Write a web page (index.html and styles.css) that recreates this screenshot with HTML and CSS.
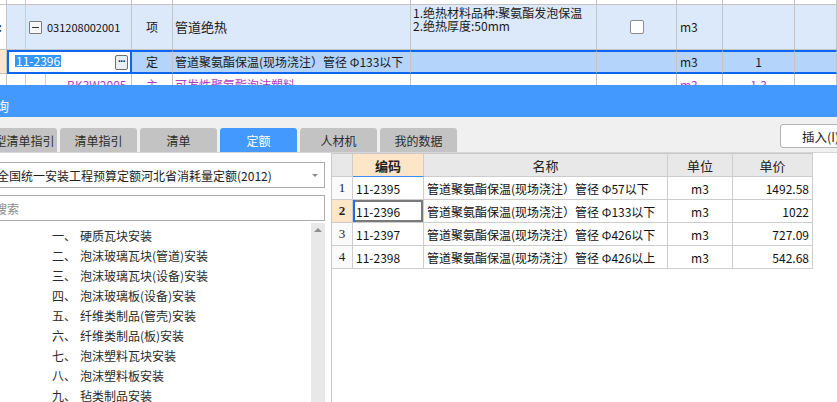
FILE: index.html
```html
<!DOCTYPE html>
<html lang="zh-CN">
<head>
<meta charset="utf-8">
<title>定额查询</title>
<link rel="stylesheet" href="styles.css">
</head>
<body>
<div class="grid-top">
  <div class="c"></div><div class="c code line1"></div><div class="c"></div><div class="c"></div><div class="c"></div><div class="c"></div><div class="c"></div><div class="c"></div><div class="c"></div>

  <div class="c rh"><span class="dots">:</span></div>
  <div class="c code line1 r1"><span class="fold"></span><span class="num">031208002001</span></div>
  <div class="c r1 center">项</div>
  <div class="c r1 name big">管道绝热</div>
  <div class="c r1 desc"><span>1.绝热材料品种:聚氨酯发泡保温</span><span>2.绝热厚度:50mm</span></div>
  <div class="c r1 center"><span class="chk"></span></div>
  <div class="c r1 unit">m3</div>
  <div class="c r1"></div>
  <div class="c r1"></div>

  <div class="c selrh"></div>
  <div class="c edit"><span class="hl">11-2396</span><span class="more">···</span></div>
  <div class="c r2 center">定</div>
  <div class="c r2 name">管道聚氨酯保温(现场浇注）管径 Φ133以下</div>
  <div class="c r2"></div>
  <div class="c r2"></div>
  <div class="c r2 unit">m3</div>
  <div class="c r2 center">1</div>
  <div class="c r2"></div>

  <div class="c"></div>
  <div class="c code line2 r3"><span class="sub">BK3W2005</span></div>
  <div class="c r3 center">主</div>
  <div class="c r3 name">可发性聚氨酯泡沫塑料</div>
  <div class="c"></div>
  <div class="c"></div>
  <div class="c r3 unit">m3</div>
  <div class="c r3 center">1.3</div>
  <div class="c"></div>
</div>

<div class="titlebar"><span class="title">查询</span></div>

<div class="toolbar">
  <div class="tabs">
    <div class="tab first">典型清单指引</div>
    <div class="tab">清单指引</div>
    <div class="tab">清单</div>
    <div class="tab active">定额</div>
    <div class="tab">人材机</div>
    <div class="tab">我的数据</div>
  </div>
  <button class="insert">插入(I)</button>
</div>

<div class="content">
  <div class="left">
    <div class="select"><span>全国统一安装工程预算定额河北省消耗量定额(2012)</span><i class="caret"></i></div>
    <div class="search">搜索</div>
    <div class="tree-wrap">
      <ul class="tree">
        <li><span class="no">一、</span>硬质瓦块安装</li>
        <li><span class="no">二、</span>泡沫玻璃瓦块(管道)安装</li>
        <li><span class="no">三、</span>泡沫玻璃瓦块(设备)安装</li>
        <li><span class="no">四、</span>泡沫玻璃板(设备)安装</li>
        <li><span class="no">五、</span>纤维类制品(管壳)安装</li>
        <li><span class="no">六、</span>纤维类制品(板)安装</li>
        <li><span class="no">七、</span>泡沫塑料瓦块安装</li>
        <li><span class="no">八、</span>泡沫塑料板安装</li>
        <li><span class="no">九、</span>毡类制品安装</li>
      </ul>
      <div class="vscroll"><i class="up"></i></div>
    </div>
  </div>
  <div class="right">
    <div class="tbl">
      <div class="h corner"></div>
      <div class="h hsel">编码</div>
      <div class="h">名称</div>
      <div class="h">单位</div>
      <div class="h">单价</div>

      <div class="rn">1</div>
      <div class="d code-d">11-2395</div>
      <div class="d name-d">管道聚氨酯保温(现场浇注）管径 Φ57以下</div>
      <div class="d ctr">m3</div>
      <div class="d price">1492.58</div>

      <div class="rn rnsel">2</div>
      <div class="d code-d focus">11-2396</div>
      <div class="d name-d">管道聚氨酯保温(现场浇注）管径 Φ133以下</div>
      <div class="d ctr">m3</div>
      <div class="d price">1022</div>

      <div class="rn">3</div>
      <div class="d code-d">11-2397</div>
      <div class="d name-d">管道聚氨酯保温(现场浇注）管径 Φ426以下</div>
      <div class="d ctr">m3</div>
      <div class="d price">727.09</div>

      <div class="rn">4</div>
      <div class="d code-d">11-2398</div>
      <div class="d name-d">管道聚氨酯保温(现场浇注）管径 Φ426以上</div>
      <div class="d ctr">m3</div>
      <div class="d price">542.68</div>
    </div>
  </div>
</div>
</body>
</html>
```

FILE: styles.css
```css
* { box-sizing: border-box; margin: 0; padding: 0; }
html, body { width: 837px; height: 402px; overflow: hidden; background: #fff; }
body {
  font-family: "Noto Sans CJK SC", "Noto Sans", sans-serif;
  font-size: 12px;
  color: #1a1a1a;
}

/* ---------- top grid ---------- */
.grid-top {
  display: grid;
  grid-template-columns: 7px 125px 41px 238px 186px 80px 46px 72px 42px;
  grid-template-rows: 5px 45px 24px 23px;
  height: 85px;
  overflow: hidden;
}
.grid-top .c {
  border-right: 1px solid #c4c4c4;
  border-bottom: 1px solid #c4c4c4;
  display: flex;
  align-items: center;
  white-space: pre;
  overflow: hidden;
  min-width: 0;
  line-height: 14px;
}
.dots { font-size: 12px; font-weight: bold; margin-left: -2px; color: #333; }
.code { padding-left: 22px; }
.line1 { background: linear-gradient(#f3c68c, #f3c68c) 18px 0 / 1px 100% no-repeat; }
.grid-top .line1.r1 { background: linear-gradient(#f3c68c, #f3c68c) 18px 0 / 1px 100% no-repeat, #dce9fb; }
.line2 {
  background:
    linear-gradient(#f3c68c, #f3c68c) 18px 0 / 1px 100% no-repeat,
    linear-gradient(#f3c68c, #f3c68c) 38px 0 / 1px 100% no-repeat,
    #fff;
}
.fold {
  width: 13px; height: 13px;
  border: 1px solid #7b7b7b;
  border-radius: 1px;
  background: #f7f7f7;
  display: flex; align-items: center; justify-content: center;
  flex: none;
}
.fold::after { content: ""; width: 7px; height: 1px; background: #333; }
.num { margin-left: 5px; font-size: 11px; color: #111; }
.r1 { background: #dce9fb; }
.r2 {
  background: #b4d4fb;
  border-top: 2px solid #0c66f1;
  border-bottom: 2px solid #0c66f1 !important;
}
.r3 { color: #b43dc1; }
.selrh { background: #fde7ca; }
.center { justify-content: center; }
.name { padding-left: 2px; }
.big { font-size: 13px; }
.grid-top .desc {
  flex-direction: column;
  align-items: flex-start;
  justify-content: flex-start;
  padding: 1px 0 0 2px;
  line-height: 13px;
}
.desc span { display: block; height: 13px; }
.chk {
  width: 14px; height: 14px;
  border: 1px solid #8d8d8d;
  border-radius: 2px;
  background: #fff;
}
.unit { padding-left: 3px; }
.sub { margin-left: 38px; }
.grid-top .edit {
  border: 2px solid #0c66f1;
  background: #fff;
  align-items: flex-start;
  padding: 3px 0 0 6px;
}
.hl {
  display: inline-block;
  height: 12px;
  line-height: 12px;
  background: #3297fd;
  color: #fff;
  padding: 0 1px;
}
.more {
  margin-left: auto;
  margin-right: 2px;
  width: 13px; height: 15px;
  border: 1px solid #6f6f6f;
  border-radius: 2px;
  background: #eceef6;
  font: bold 10px/12px "Liberation Sans", sans-serif;
  text-align: center;
  color: #222;
  letter-spacing: -1px;
}

/* ---------- title bar ---------- */
.titlebar {
  height: 32px;
  background: #4499ff;
  color: #fff;
  font-size: 13px;
  display: flex;
  align-items: center;
  padding-top: 8px;
}
.title { margin-left: -17px; }

/* ---------- tabs ---------- */
.toolbar {
  height: 36px;
  background: #f0f0f0;
  border-bottom: 1px solid #d6d6d6;
  display: flex;
}
.tabs { display: flex; gap: 3px; align-self: flex-end; }
.tab {
  width: 77px;
  height: 24px;
  background: #c3c3c3;
  border-radius: 3px 3px 0 0;
  color: #2b2b2b;
  font-size: 12px;
  display: flex; align-items: center; justify-content: center;
  white-space: nowrap;
}
.tab.first { margin-left: -20px; }
.tab.active { background: #4499ff; color: #fff; }
.insert {
  margin-left: auto;
  margin-top: 7px;
  margin-right: -3px;
  align-self: flex-start;
  height: 24px;
  width: 60px;
  background: #fff;
  border: 1px solid #b4b4b4;
  border-radius: 3px;
  font-family: "Noto Sans CJK SC", sans-serif;
  font-size: 12.5px;
  color: #222;
  text-align: left;
  padding-left: 21px;
  white-space: nowrap;
}

/* ---------- content ---------- */
.content { display: flex; height: 249px; }
.left { width: 325px; padding-top: 9px; display: flex; flex-direction: column; flex: none; }
.select, .search {
  height: 26px;
  margin-left: -10px;
  width: 335px;
  border: 1px solid #acacac;
  background: #fff;
  display: flex;
  align-items: center;
  white-space: nowrap;
}
.select { padding-left: 6px; color: #222; }
.caret {
  margin-left: auto;
  margin-right: 6px;
  border-left: 3px solid transparent;
  border-right: 3px solid transparent;
  border-top: 3px solid #8a8a8a;
}
.search { margin-top: 7px; padding-left: 4px; color: #8a8a8a; }
.tree-wrap { flex: 1; display: flex; min-height: 0; }
.tree { flex: 1; list-style: none; padding: 4px 0 0 52px; color: #2a2a2a; }
.tree li { height: 20px; display: flex; align-items: center; white-space: nowrap; }
.tree .no { width: 28px; flex: none; }
.vscroll { width: 14px; margin-top: 2px; background: #e8e8e8; display: flex; justify-content: center; }
.up {
  margin-top: 5px;
  width: 0; height: 0;
  border-left: 4.5px solid transparent;
  border-right: 4.5px solid transparent;
  border-bottom: 4px solid #8f8f8f;
}

.right { margin-left: 6px; border-left: 1px solid #c9c9c9; flex: 1; }
.tbl {
  display: grid;
  grid-template-columns: 21px 71px 244px 65px 80px;
  grid-template-rows: repeat(5, 23px);
  width: 481px;
  border-top: 1px solid #c9c9c9;
}
.tbl > div {
  border-right: 1px solid #cdcdcd;
  border-bottom: 1px solid #cdcdcd;
  display: flex;
  align-items: center;
  white-space: pre;
  overflow: hidden;
}
.h { background: #e8e8e8; justify-content: center; font-size: 13px; color: #222; }
.tbl .hsel { background: #fde6c8; font-weight: bold; border-bottom: 1px solid #3b8ef5; }
.rn {
  justify-content: center;
  font-family: "Liberation Serif", serif;
  font-size: 13px;
  background: #fafafa;
  color: #222;
}
.rnsel { background: #fde6c8; font-weight: bold; }
.d { font-size: 12px; color: #111; }
.code-d, .name-d { padding-left: 3px; }
.ctr { justify-content: center; }
.price { justify-content: flex-end; padding-right: 3px; }
.focus {
  box-shadow: inset 2px 0 0 #1a6ff0, inset 0 2px 0 #7a7a7a, inset -2px 0 0 #7a7a7a, inset 0 -2px 0 #7a7a7a;
}
```
